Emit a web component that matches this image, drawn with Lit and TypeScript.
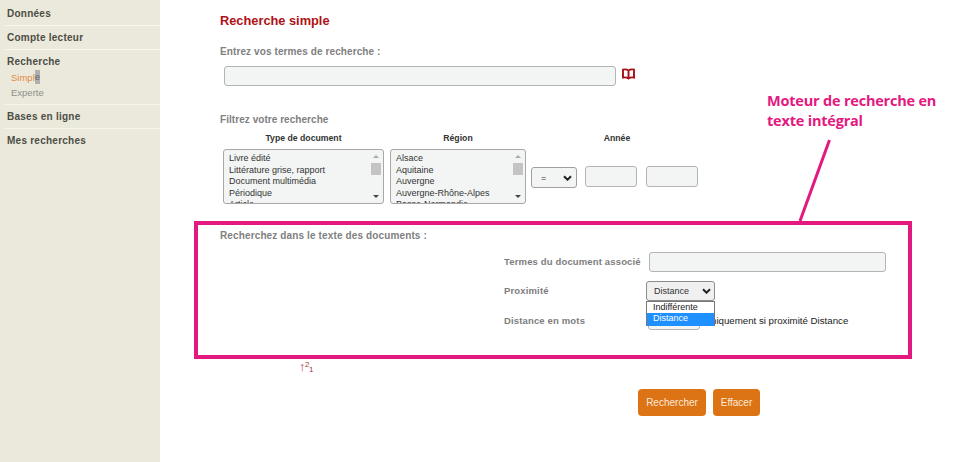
import { LitElement, html, css } from "lit";
import { customElement } from "lit/decorators.js";

const chevron = html`<svg class="chev" width="9" height="6" viewBox="0 0 9 6"><path d="M1 1.200 4.500 4.700 8 1.200" fill="none" stroke="#222" stroke-width="2"/></svg>`;

@customElement("app-root")
export class AppRoot extends LitElement {
  static styles = css`
    :host { display: block; position: relative; width: 960px; height: 462px; overflow: hidden; background: #fff; font-family: "Liberation Sans", Arial, sans-serif; }
    * { box-sizing: border-box; }
    .page { display: flex; height: 462px; }
    .side { width: 160px; flex: none; background: #ebe9dc; padding: 2px 0 0 5px; }
    .nav { border-bottom: 1px solid #f6f5ee; padding: 5px 0 6px 2px; height: 24px; font-size: 10px; font-weight: bold; color: #4d4d45; line-height: 13px; letter-spacing: .25px; }
    .nav.last { border: 0; }
    .nav.open { height: 55px; }
    .sub { font-size: 9.5px; font-weight: normal; line-height: 15px; margin-left: 4px; letter-spacing: 0; color: #8f8f88; }
    .sub.first { margin-top: 2px; color: #e08a3c; }
    .sel { display: inline-block; height: 14px; line-height: 14px; background: #b0b0b0; color: #666; vertical-align: top; }
    .main { flex: 1; padding: 13px 0 0 60px; display: flex; flex-direction: column; align-items: flex-start; }
    h1 { margin: 0; font-size: 12.8px; line-height: 15px; color: #b01116; font-weight: bold; }
    .lab { font-size: 10px; font-weight: bold; color: #808080; line-height: 12px; letter-spacing: .1px; white-space: nowrap; }
    .terms { margin-top: 18px; }
    .search { display: flex; align-items: flex-start; gap: 6px; margin: 8px 0 0 4px; height: 20px; }
    .book { margin-top: 2px; }
    .in { display: block; background: #f3f5f5; border: 1px solid #b4b4b4; border-radius: 3px; height: 20px; padding: 0; }
    .wide { width: 392px; }
    .filter { margin-top: 28px; letter-spacing: .05px; }
    .cols { display: grid; grid-template-columns: 161px 136px 167px; column-gap: 6px; margin: 7px 0 0 3px; }
    .head { font-size: 8.7px; line-height: 11px; font-weight: bold; color: #333; text-align: center; }
    .head.year { padding-left: 3px; }
    .list { position: relative; margin-top: 5px; height: 55px; border: 1px solid #a8a8a8; border-radius: 3px; background: #f3f5f5; overflow: hidden; padding: 3px 0 0 5px; font-size: 9px; line-height: 11.5px; color: #333; white-space: nowrap; }
    .bar { position: absolute; right: 0; top: 0; bottom: 0; width: 13px; display: flex; flex-direction: column; align-items: center; padding-right: 1px; }
    .thumb { width: 10px; height: 12px; background: #c4c4c4; margin-top: 5px; }
    .up, .down { width: 0; height: 0; border-left: 3px solid transparent; border-right: 3px solid transparent; }
    .up { border-bottom: 3px solid #aaa; margin-top: 5px; }
    .down { border-top: 3px solid #444; margin-top: auto; margin-bottom: 5px; }
    .year-row { display: flex; align-items: flex-start; margin: 22px 0 0 -1px; gap: 8px; }
    .dd { display: flex; align-items: center; justify-content: space-between; border: 1px solid #a0a0a0; border-radius: 3px; background: #f3f5f5; font-size: 9px; color: #333; }
    .eq { width: 46px; height: 21px; padding: 0 4px 0 9px; margin-top: 1px; }
    .yi { width: 52px; height: 21px; }
    .year-row .yi + .yi { margin-left: 1px; }
    .full { margin-top: 26px; letter-spacing: .13px; }
    .assoc { display: grid; grid-template-columns: 142px auto; margin: 10px 0 0 284px; align-items: center; }
    .lab2 { font-size: 9.5px; font-weight: bold; color: #7d7d7d; line-height: 12px; letter-spacing: .15px; white-space: nowrap; }
    .ti { width: 237px; margin-left: 3px; }
    .prox { margin-top: 9px; height: 20px; }
    .prox-lab { line-height: 20px; }
    .pd { width: 69px; height: 20px; padding: 0 3px 0 7px; background: #f0f0f0; border-color: #8c8c8c; position: relative; }
    .menu { position: absolute; left: -1px; top: 19px; width: 69px; background: #fff; border: 1px solid #777; font-size: 9px; line-height: 11.5px; color: #222; z-index: 2; height: 25px; }
    .menu div { padding-left: 6px; height: 11px; }
    .menu .on { background: #1e90ff; color: #fff; height: 13px; }
    .dist { margin-top: 9px; }
    .dist-lab { padding-top: 1px; }
    .dist-val { display: flex; align-items: center; margin-left: 2px; gap: 4px; font-size: 9.7px; color: #222; white-space: nowrap; }
    .di { width: 52px; height: 20px; }
    .btns { display: flex; gap: 7px; margin: 59px 0 0 418px; }
    .btn { height: 27px; border-radius: 4px; background: #dc7416; color: #fbe9d8; font: 10px/27px "Liberation Sans", Arial, sans-serif; text-align: center; border: 0; padding: 0; }
    .b1 { width: 68px; } .b2 { width: 47px; }
    .frame { position: absolute; left: 194px; top: 221px; width: 718px; height: 138px; border: 4px solid #e3197f; pointer-events: none; }
    .note { position: absolute; left: 767px; top: 91px; font: bold 14.5px/20px "Open Sans", sans-serif; color: #e3197f; letter-spacing: -.2px; white-space: nowrap; }
    .line { position: absolute; left: 790px; top: 135px; }
    .mark { position: absolute; left: 299px; top: 357px; width: 18px; height: 17px; font-size: 8px; line-height: 8px; color: #a33; }
    .mark span { position: absolute; }
    .mark .arrow { left: 0; top: 3px; font-size: 13px; line-height: 13px; }
    .mark .two { left: 6px; top: 4px; }
    .mark .one { left: 10px; top: 9px; }
  `;

  render() {
    return html`
      <div class="page">
        <nav class="side">
          <div class="nav">Données</div>
          <div class="nav">Compte lecteur</div>
          <div class="nav open">Recherche
            <div class="sub first">Simpl<span class="sel">e</span></div>
            <div class="sub">Experte</div>
          </div>
          <div class="nav">Bases en ligne</div>
          <div class="nav last">Mes recherches</div>
        </nav>
        <main class="main">
          <h1>Recherche simple</h1>
          <div class="lab terms">Entrez vos termes de recherche :</div>
          <div class="search">
            <input class="in wide" />
            <svg class="book" width="13" height="12" viewBox="0 0 13 12"><path d="M6.5 2.5C5 1.4 3 1.2 1 1.6v8c2-.4 4-.2 5.5.9 1.5-1.1 3.500-1.300 5.500-.9v-8C10 1.200 8 1.400 6.500 2.500ZM6.500 2.500v8" fill="none" stroke="#a80f14" stroke-width="1.900"/></svg>
          </div>
          <div class="lab filter">Filtrez votre recherche</div>
          <div class="cols">
            <div class="col">
              <div class="head">Type de document</div>
              <div class="list">Livre édité<br />Littérature grise, rapport<br />Document multimédia<br />Périodique<br />Article
                <div class="bar"><i class="up"></i><i class="thumb"></i><i class="down"></i></div>
              </div>
            </div>
            <div class="col">
              <div class="head">Région</div>
              <div class="list">Alsace<br />Aquitaine<br />Auvergne<br />Auvergne-Rhône-Alpes<br />Basse-Normandie
                <div class="bar"><i class="up"></i><i class="thumb"></i><i class="down"></i></div>
              </div>
            </div>
            <div class="col">
              <div class="head year">Année</div>
              <div class="year-row">
                <div class="dd eq">=${chevron}</div>
                <input class="in yi" />
                <input class="in yi" />
              </div>
            </div>
          </div>
          <div class="lab full">Recherchez dans le texte des documents :</div>
          <div class="assoc">
            <div class="lab2">Termes du document associé</div>
            <input class="in ti" />
            <div class="lab2 prox prox-lab">Proximité</div>
            <div class="prox">
              <div class="dd pd">Distance${chevron}
                <div class="menu"><div>Indifférente</div><div class="on">Distance</div></div>
              </div>
            </div>
            <div class="lab2 dist dist-lab">Distance en mots</div>
            <div class="dist dist-val"><input class="in di" />Uniquement si proximité Distance</div>
          </div>
          <div class="btns">
            <button class="btn b1">Rechercher</button>
            <button class="btn b2">Effacer</button>
          </div>
        </main>
      </div>
      <div class="frame"></div>
      <div class="note">Moteur de recherche en<br />texte intégral</div>
      <svg class="line" width="50" height="90" viewBox="0 0 50 90"><path d="M39.500 5 10 86" stroke="#e3197f" stroke-width="3" fill="none"/></svg>
      <div class="mark"><span class="arrow">↑</span><span class="two">2</span><span class="one">1</span></div>
    `;
  }
}
